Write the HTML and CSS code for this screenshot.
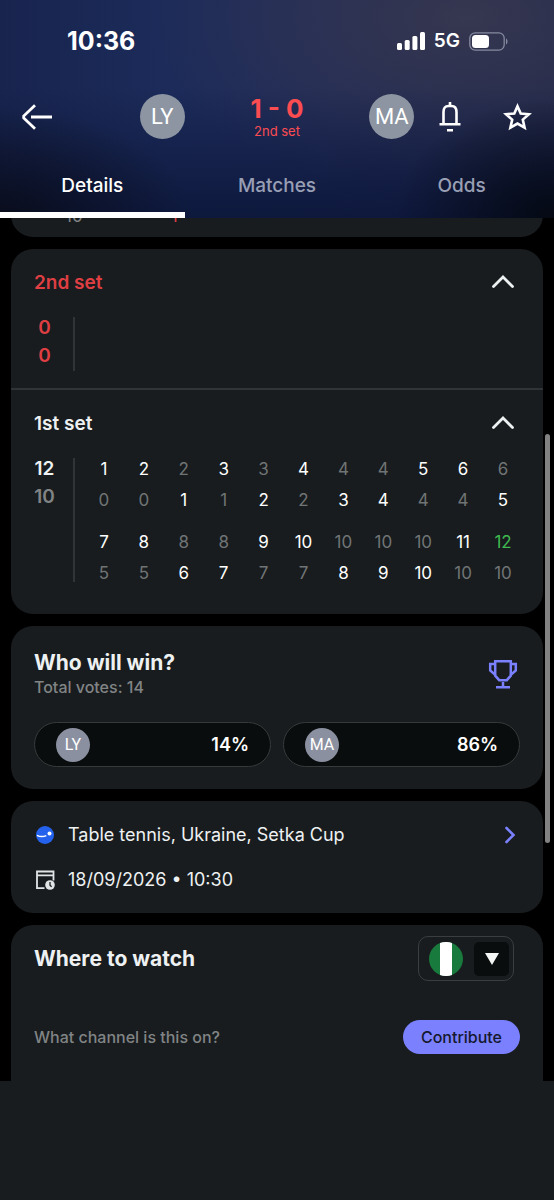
FILE: index.html
```html
<!DOCTYPE html>
<html lang="en">
<head>
<meta charset="utf-8">
<meta name="viewport" content="width=device-width, initial-scale=1">
<title>LY - MA, Table tennis</title>
<link rel="stylesheet" href="styles.css">
</head>
<body>
<header class="header">
  <div class="status">
    <span class="clock">10:36</span>
    <div class="status-icons">
      <svg width="28" height="18" viewBox="0 0 28 18" fill="#fff" aria-hidden="true"><rect x="0" y="11" width="5" height="7" rx="1.5"/><rect x="7.7" y="8" width="5" height="10" rx="1.5"/><rect x="15.4" y="4" width="5" height="14" rx="1.5"/><rect x="23" y="0" width="5" height="18" rx="1.5"/></svg>
      <span class="network">5G</span>
      <svg width="39" height="19" viewBox="0 0 39 19" aria-hidden="true"><rect x=".8" y=".8" width="34.4" height="17.4" rx="5.4" fill="none" stroke="#858ba0" stroke-width="1.3"/><rect x="3" y="3" width="17" height="13" rx="3.5" fill="#fff"/><path d="M37 6.5c2 .8 2 5.2 0 6z" fill="#858ba0"/></svg>
    </div>
  </div>
  <div class="match-bar">
    <div class="match-side">
      <button class="icon-button" aria-label="Back"><svg width="30" height="26" viewBox="0 0 30 26" fill="none" stroke="#fff" stroke-width="2.8" aria-hidden="true"><path d="M13 1.2 1.7 12v2L13 24.8M9 13h21"/></svg></button>
      <span class="avatar">LY</span>
    </div>
    <div class="score">
      <strong class="score-value">1 - 0</strong>
      <span class="score-period">2nd set</span>
    </div>
    <div class="match-side match-side-end">
      <div class="follow">
        <span class="avatar">MA</span>
        <button class="icon-button" aria-label="Notifications"><svg width="22" height="30" viewBox="0 0 22 30" fill="none" stroke="#fff" stroke-width="2.6" aria-hidden="true"><path d="M11 0v4M4.500 22V10Q4.500 4 9.500 4h3Q17.500 4 17.500 10V22M.5 22.300h21M8 28.200h6"/></svg></button>
      </div>
      <button class="icon-button" aria-label="Add to favourites"><svg width="29" height="28" viewBox="0 0 29 28" fill="none" stroke="#fff" stroke-width="2.600" aria-hidden="true"><path d="m14.500 3.200 3.200 7.300 8.300.7-6.200 5.400 1.800 8.100-7.100-4.100-7.100 4.100 1.800-8.100L3 11.200l8.300-.7z"/></svg></button>
    </div>
  </div>
  <nav class="tabs">
    <a class="tab tab-active" href="#details" aria-current="page">Details</a>
    <a class="tab" href="#matches">Matches</a>
    <a class="tab" href="#odds">Odds</a>
  </nav>
</header>

<main class="content" id="details">
  <section class="card card-passed">
    <span class="muted">10</span><span class="live">1</span>
  </section>

  <section class="card">
    <div class="set">
      <div class="set-head">
        <h2 class="set-title live">2nd set</h2>
        <button class="icon-button" aria-label="Collapse 2nd set"><svg width="24" height="16" viewBox="0 0 24 16" fill="none" stroke="#eef1f2" stroke-width="2.800" stroke-linecap="round" aria-hidden="true"><path d="M2.500 11.500 12 2l9.500 9.500"/></svg></button>
      </div>
      <div class="set-body">
        <div class="set-score live"><span>0</span><span>0</span></div>
      </div>
    </div>
    <div class="set set-last">
      <div class="set-head">
        <h2 class="set-title">1st set</h2>
        <button class="icon-button" aria-label="Collapse 1st set"><svg width="24" height="16" viewBox="0 0 24 16" fill="none" stroke="#eef1f2" stroke-width="2.800" stroke-linecap="round" aria-hidden="true"><path d="M2.500 11.500 12 2l9.500 9.500"/></svg></button>
      </div>
      <div class="set-body">
        <div class="set-score"><span>12</span><span class="muted">10</span></div>
        <div class="points-wrap">
        <table class="points">
          <tbody>
            <tr><td class="on">1</td><td class="on">2</td><td>2</td><td class="on">3</td><td>3</td><td class="on">4</td><td>4</td><td>4</td><td class="on">5</td><td class="on">6</td><td>6</td></tr>
            <tr><td>0</td><td>0</td><td class="on">1</td><td>1</td><td class="on">2</td><td>2</td><td class="on">3</td><td class="on">4</td><td>4</td><td>4</td><td class="on">5</td></tr>
          </tbody>
          <tbody>
            <tr><td class="on">7</td><td class="on">8</td><td>8</td><td>8</td><td class="on">9</td><td class="on">10</td><td>10</td><td>10</td><td>10</td><td class="on">11</td><td class="won">12</td></tr>
            <tr><td>5</td><td>5</td><td class="on">6</td><td class="on">7</td><td>7</td><td>7</td><td class="on">8</td><td class="on">9</td><td class="on">10</td><td>10</td><td>10</td></tr>
          </tbody>
        </table>
        </div>
      </div>
    </div>
  </section>

  <section class="card poll">
    <div class="poll-head">
      <div>
        <h2 class="heading">Who will win?</h2>
        <p class="note">Total votes: 14</p>
      </div>
      <svg width="30" height="30" viewBox="0 0 30 30" fill="none" stroke="#7b80ff" stroke-width="2.500" aria-hidden="true"><path d="M7.200 2.200h15.600v14.500l-4 4.500h-7.600l-4-4.500zM7 5H2.200v6.500L8 16.500M23 5h4.800v6.500L22 16.500M15 23v4.500M8 28.200h14"/></svg>
    </div>
    <div class="votes">
      <button class="vote"><span class="avatar avatar-small">LY</span><span>14%</span></button>
      <button class="vote"><span class="avatar avatar-small">MA</span><span>86%</span></button>
    </div>
  </section>

  <section class="card info">
    <a class="info-row" href="#competition">
      <svg width="22" height="22" viewBox="0 0 22 22" aria-hidden="true"><circle cx="11" cy="11" r="9" fill="#2462ed"/><path d="M3 11.300c3 1.600 6.500 1.500 9.300.3" fill="none" stroke="#fff" stroke-width="1.500"/><circle cx="15.500" cy="9.500" r="2" fill="#fff"/></svg>
      <span class="info-text">Table tennis, Ukraine, Setka Cup</span>
      <svg width="12" height="18" viewBox="0 0 12 18" fill="none" stroke="#7b80ff" stroke-width="2.600" stroke-linecap="round" aria-hidden="true"><path d="m2.500 2 7 7-7 7"/></svg>
    </a>
    <div class="info-row">
      <svg width="22" height="22" viewBox="0 0 22 22" fill="none" stroke="#e2e5e6" stroke-width="1.800" aria-hidden="true"><path d="M10.500 19.100H3V2.500h16.500v9M3 6.300h16.500"/><circle cx="16" cy="16" r="4.800" fill="#e2e5e6" stroke="none"/><path d="M16 13v3.200l1.600 1.600" stroke="#181c1e" stroke-width="1.300"/></svg>
      <time class="info-text" datetime="2026-09-18T10:30">18/09/2026 • 10:30</time>
    </div>
  </section>

  <section class="card watch">
    <div class="watch-head">
      <h2 class="heading">Where to watch</h2>
      <div class="country">
        <svg width="34" height="34" viewBox="0 0 34 34" aria-hidden="true"><circle cx="17" cy="17" r="17" fill="#187a3c"/><path d="M11 1.100a17 17 0 0 1 12 0v31.800a17 17 0 0 1-12 0z" fill="#fff"/></svg>
        <span class="country-arrow"><svg width="14" height="12" viewBox="0 0 14 12" aria-hidden="true"><path d="M0 0h14L7 12z" fill="#f4f5f5"/></svg></span>
        <select class="country-select" aria-label="Country"><option>Nigeria</option></select>
      </div>
    </div>
    <div class="watch-foot">
      <p class="note">What channel is this on?</p>
      <button class="contribute">Contribute</button>
    </div>
  </section>
</main>
<footer class="bottom"></footer>
<div class="scroll-thumb"></div>
</body>
</html>
```
FILE: styles.css
```css
*, *::before, *::after { box-sizing: border-box; }

body {
  margin: 0;
  min-height: 100vh;
  display: flex;
  flex-direction: column;
  background: #000;
  color: #eef1f2;
  font-family: Inter, "Liberation Sans", sans-serif;
  font-size: 16px;
}

h2, p { margin: 0; }
button { font: inherit; color: inherit; border: 0; background: none; padding: 0; cursor: pointer; }
a { color: inherit; text-decoration: none; }
svg { display: block; flex: none; }
.icon-button { display: flex; }

/* Header stays above the scrolled cards */
.header {
  position: sticky;
  top: 0;
  z-index: 1;
  background:
    radial-gradient(ellipse 190px 110px at 0 100%, rgba(8, 10, 20, .8), rgba(8, 10, 20, 0)),
    radial-gradient(ellipse 160px 120px at 100% 100%, rgba(3, 6, 12, .85), rgba(3, 6, 12, 0)),
    linear-gradient(to bottom, rgba(11, 21, 56, 0) 40%, rgba(11, 21, 56, .85) 100%),
    radial-gradient(ellipse 320px 180px at 84% 8%, #363750, rgba(54, 55, 80, 0)),
    linear-gradient(to right, #18244e, #1c2b5a 30%, #1f2b59 60%, #1c2549);
}
.status {
  display: flex;
  justify-content: space-between;
  align-items: center;
  padding: 27px 46px 0 67px;
}
.clock { font-size: 25px; line-height: 28px; font-weight: 700; color: #fff; }
.status-icons { display: flex; align-items: center; gap: 9px; }
.network { font-size: 19px; line-height: 28px; font-weight: 600; color: #fff; }

.match-bar {
  display: grid;
  grid-template-columns: 1fr 1fr 1fr;
  align-items: center;
  padding-top: 39px;
}
.match-side { display: flex; align-items: center; justify-content: space-between; padding-left: 22px; }
.match-side-end { padding: 0 22px 0 0; }
.follow { display: flex; align-items: center; gap: 25px; }
.avatar {
  display: flex;
  align-items: center;
  justify-content: center;
  width: 45px;
  height: 45px;
  border-radius: 50%;
  background: #8c95a1;
  color: #fff;
  font-family: Roboto, "Liberation Sans", sans-serif;
  font-size: 22px;
  font-weight: 400;
}
.avatar-small { width: 34px; height: 34px; font-size: 16px; background: #8b90a0; }
.score { display: flex; flex-direction: column; align-items: center; color: #fb4c52; }
.score-value { font-size: 26px; line-height: 28px; font-weight: 700; }
.score-period { font-size: 13px; line-height: 16px; }

.tabs { display: grid; grid-template-columns: 1fr 1fr 1fr; padding-top: 35px; }
.tab {
  padding-bottom: 14px;
  border-bottom: 6px solid transparent;
  text-align: center;
  font-size: 19px;
  line-height: 24px;
  font-weight: 500;
  color: #989fb4;
}
.tab-active { color: #fff; border-color: #fff; }

/* Cards */
.content { display: flex; flex-direction: column; gap: 12px; margin-top: -12px; padding: 0 11px; }
.card { background: #181c1e; border-radius: 22px; }
.heading { font-size: 21px; line-height: 24px; font-weight: 700; }
.note { font-size: 16px; line-height: 20px; font-weight: 500; color: #818485; }
.live { color: #df3f43; }
.muted { color: #818485; }

.card-passed {
  display: flex;
  gap: 88px;
  padding: 0 54px 11px;
  border-radius: 0 0 22px 22px;
  font-size: 17px;
  line-height: 20px;
}

/* Sets */
.set { padding: 22px 20px 17px 23px; border-bottom: 2px solid #303436; }
.set-last { padding-bottom: 32px; border-bottom: 0; }
.set-head { display: flex; justify-content: space-between; align-items: center; padding-right: 8px; }
.set-title { font-size: 19px; line-height: 24px; font-weight: 600; }
.set-body { display: flex; padding-top: 22px; }
.set-score {
  flex: none;
  display: flex;
  flex-direction: column;
  gap: 6px;
  width: 41px;
  padding: 0 18px 4px 0;
  border-right: 2px solid #303436;
  text-align: center;
  font-size: 19px;
  line-height: 22px;
  font-weight: 600;
}
.points-wrap { flex: 1; padding: 2px 0 0 9px; }
.points {
  width: 100%;
  table-layout: fixed;
  border-collapse: collapse;
  font-size: 17px;
  line-height: 18px;
  text-align: center;
  color: #707475;
}
.points td { padding: 0 0 13px; }
.points tr:last-child td { padding-bottom: 24px; }
.points tbody:last-child tr:last-child td { padding-bottom: 0; }
.points .on { color: #fff; }
.points .won { color: #3fb950; }

/* Poll */
.poll { padding: 25px 23px 22px; }
.poll-head { display: flex; justify-content: space-between; align-items: center; padding-right: 2px; }
.poll-head .note { padding-top: 2px; }
.votes { display: grid; grid-template-columns: 1fr 1fr; gap: 12px; padding-top: 25px; }
.vote {
  display: flex;
  align-items: center;
  justify-content: space-between;
  height: 45px;
  padding: 0 21px;
  border: 1px solid #363a3b;
  border-radius: 23px;
  background: #090d0d;
  color: #fff;
  font-size: 18px;
  font-weight: 600;
}

/* Competition and date */
.info { display: flex; flex-direction: column; gap: 21px; padding: 22px 27px 21px 23px; }
.info-row { display: flex; align-items: center; gap: 12px; font-size: 18px; line-height: 24px; }
.info-text { flex: 1; }

/* Where to watch */
.watch { border-radius: 22px 22px 0 0; padding: 11px 23px 27px; }
.watch-head { display: flex; justify-content: space-between; align-items: center; padding-right: 6px; }
.country {
  position: relative;
  display: flex;
  align-items: center;
  gap: 11px;
  padding: 5px 4px 4px 10px;
  border: 1px solid #3a3e40;
  border-radius: 10px;
}
.country-arrow {
  display: flex;
  align-items: center;
  justify-content: center;
  width: 35px;
  height: 34px;
  border-radius: 5px;
  background: #090d0d;
}
.country-select { position: absolute; inset: 0; width: 100%; height: 100%; opacity: 0; }
.watch-foot { display: flex; justify-content: space-between; align-items: center; padding-top: 39px; }
.contribute {
  height: 34px;
  padding: 0 18px;
  border-radius: 17px;
  background: #7b80ff;
  color: #14182c;
  font-size: 16px;
  font-weight: 500;
}

.bottom { flex: 1; background: #181c1e; }
.scroll-thumb {
  position: fixed;
  top: 434px;
  right: 4px;
  width: 5px;
  height: 409px;
  border-radius: 3px;
  background: #828282;
}
```
